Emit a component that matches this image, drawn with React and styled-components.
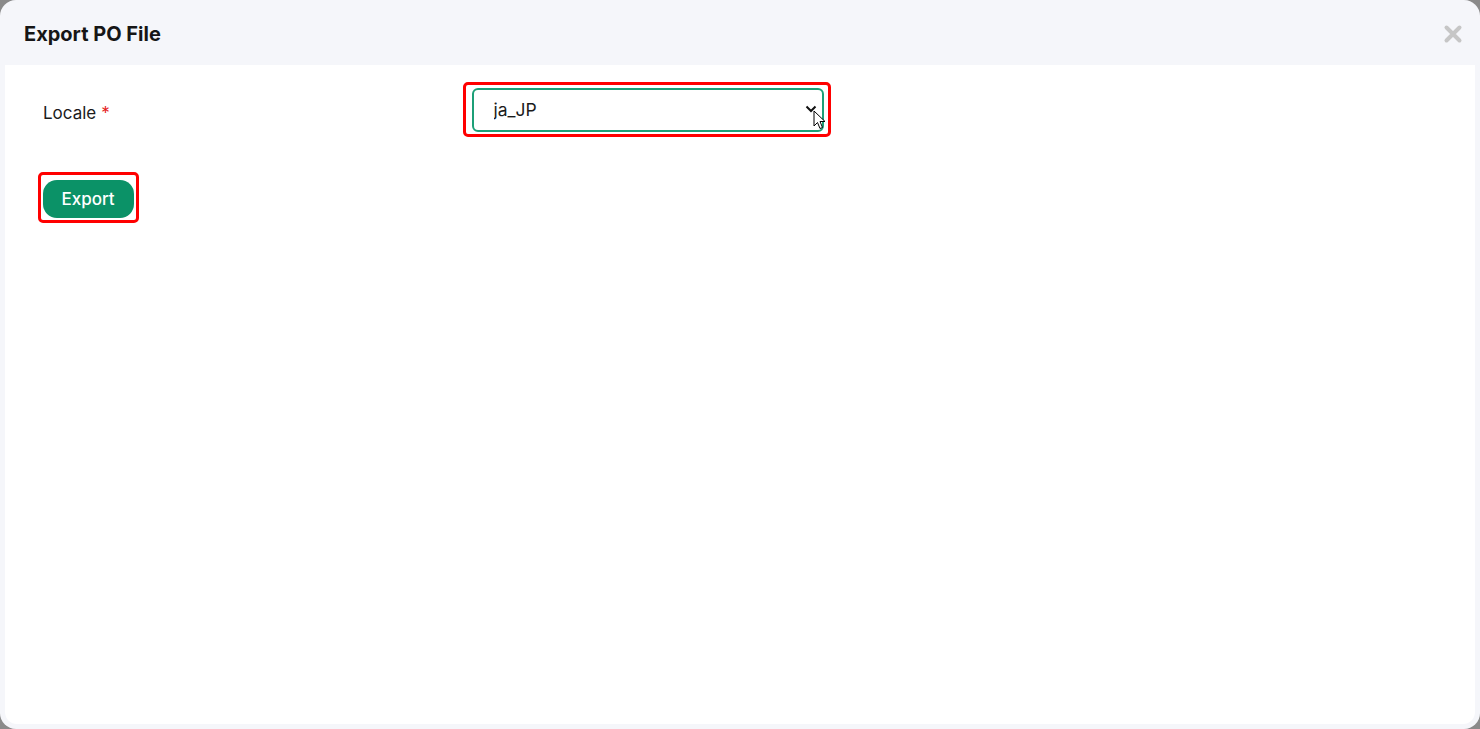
import styled, { createGlobalStyle } from "styled-components";

const GlobalStyle = createGlobalStyle`
  html, body {
    margin: 0;
    padding: 0;
    background: #8a8a8a;
    font-family: Inter, "Noto Sans", sans-serif;
  }
`;

const Modal = styled.div`
  width: 1480px;
  height: 729px;
  box-sizing: border-box;
  background: #f5f6fa;
  border-radius: 16px;
  padding: 0 5px 5px;
  display: flex;
  flex-direction: column;
  overflow: hidden;
`;

const Header = styled.div`
  height: 65px;
  display: flex;
  align-items: center;
  justify-content: space-between;
  padding: 2px 10px 0 19px;
  box-sizing: border-box;
  flex-shrink: 0;
`;

const Title = styled.h2`
  margin: 0;
  font-size: 20px;
  font-weight: 700;
  color: #161616;
`;

const CloseButton = styled.button`
  border: none;
  background: none;
  padding: 0;
  width: 24px;
  height: 24px;
  display: flex;
  align-items: center;
  justify-content: center;
  cursor: pointer;
`;

const Body = styled.div`
  flex: 1;
  background: #fff;
  border-radius: 0 0 12px 12px;
  padding: 17px 33px 0 38px;
`;

const FormRow = styled.div`
  display: grid;
  grid-template-columns: 420px 1fr;
  align-items: center;
`;

const Label = styled.label`
  font-size: 17px;
  color: #1b1b1b;
  margin-top: 6px;
`;

const Required = styled.span`
  color: #e5221b;
  margin-left: 5px;
`;

const Highlight = styled.div`
  display: inline-flex;
  border: 3.5px solid #ff0000;
  border-radius: 5px;
  padding: ${(p) => p.$pad};
  margin-left: ${(p) => p.$shift || "0"};
  position: relative;
  justify-self: start;
`;

const SelectBox = styled.div`
  position: relative;
  width: 352px;
  height: 44px;
`;

const Select = styled.select`
  appearance: none;
  width: 100%;
  height: 100%;
  box-sizing: border-box;
  border: 2px solid #1c9f77;
  border-radius: 6px;
  background: #fff;
  padding: 0 0 0 20px;
  font-family: Inter, "Noto Sans", sans-serif;
  font-size: 17.5px;
  color: #1b1b1b;
  outline: none;
`;

const Chevron = styled.svg`
  position: absolute;
  right: 7px;
  top: 17px;
  pointer-events: none;
`;

const Cursor = styled.svg`
  position: absolute;
  left: 341px;
  top: 22px;
  pointer-events: none;
`;

const Actions = styled.div`
  margin-top: 35px;
`;

const ExportButton = styled.button`
  width: 91px;
  height: 38px;
  border: none;
  border-radius: 14px;
  background: #0b9267;
  color: #fff;
  font-family: Inter, "Noto Sans", sans-serif;
  font-size: 17px;
  font-weight: 500;
  cursor: pointer;
`;

export default function App() {
  return (
    <>
      <GlobalStyle />
      <Modal>
        <Header>
          <Title>Export PO File</Title>
          <CloseButton aria-label="Close">
            <svg width="20" height="20" viewBox="0 0 20 20">
              <path
                d="M3.5 3.5 L16.5 16.5 M16.5 3.5 L3.5 16.5"
                stroke="#c6c6c6"
                strokeWidth="4"
                strokeLinecap="round"
              />
            </svg>
          </CloseButton>
        </Header>
        <Body>
          <FormRow>
            <Label>
              Locale<Required>*</Required>
            </Label>
            <Highlight $pad="2.5px 4.5px 2.5px 5.5px">
              <SelectBox>
                <Select defaultValue="ja_JP">
                  <option value="ja_JP">ja_JP</option>
                </Select>
                <Chevron width="12" height="8" viewBox="0 0 12 8">
                  <path
                    d="M1.5 1.5 L6 6 L10.5 1.5"
                    fill="none"
                    stroke="#111"
                    strokeWidth="2"
                  />
                </Chevron>
                <Cursor width="13" height="20" viewBox="0 0 13 20">
                  <path
                    d="M1 1 L1 16 L4.5 12.5 L7 18.5 L9.5 17.5 L7 11.5 L12 11.5 Z"
                    fill="#fff"
                    stroke="#000"
                    strokeWidth="1"
                    strokeLinejoin="round"
                  />
                </Cursor>
              </SelectBox>
            </Highlight>
          </FormRow>
          <Actions>
            <Highlight $pad="4.5px 2.5px 2.5px 1.5px" $shift="-5px">
              <ExportButton>Export</ExportButton>
            </Highlight>
          </Actions>
        </Body>
      </Modal>
    </>
  );
}
